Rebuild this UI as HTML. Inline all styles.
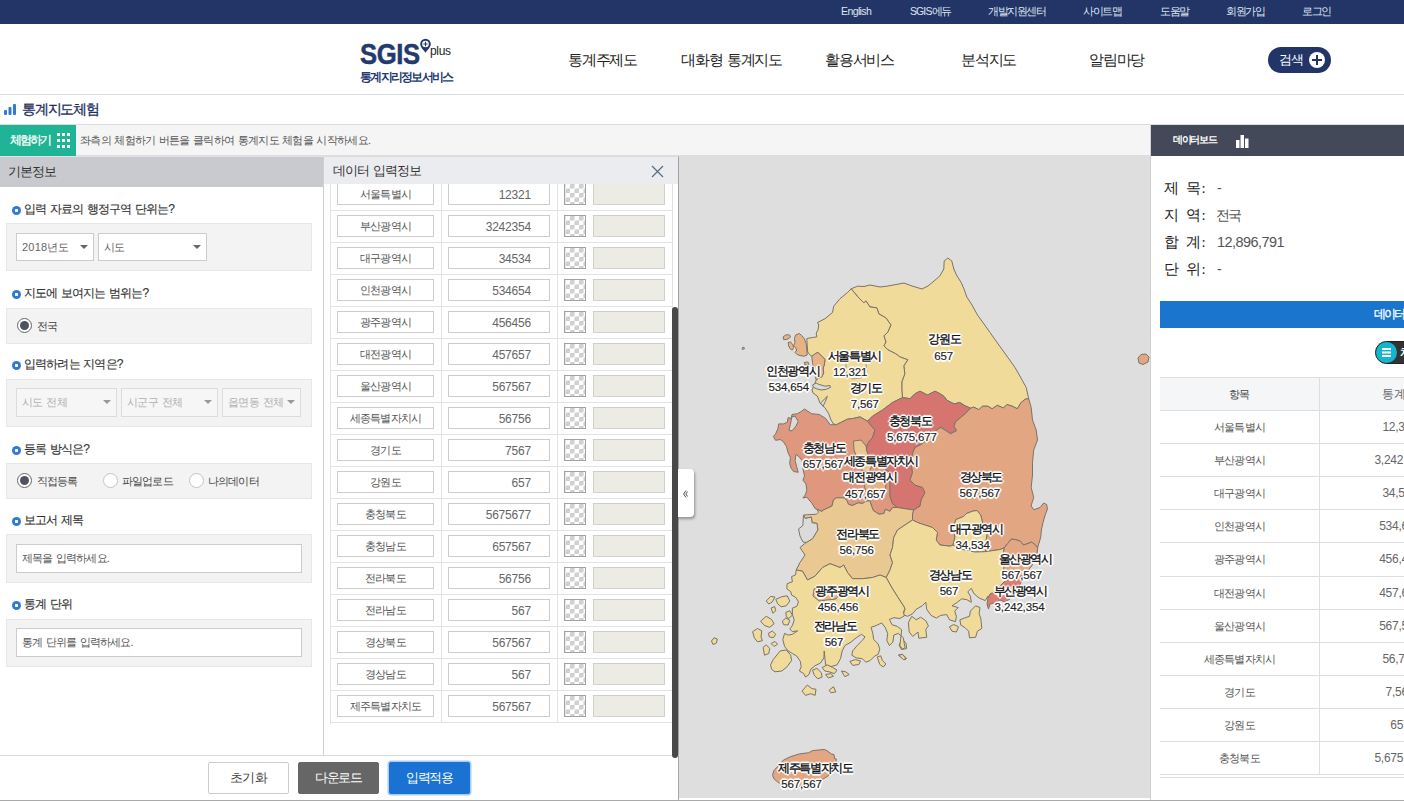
<!DOCTYPE html>
<html lang="ko">
<head>
<meta charset="utf-8">
<title>통계지도체험</title>
<style>
*{box-sizing:border-box;margin:0;padding:0}
html,body{width:1404px;height:801px;overflow:hidden;background:#fff;font-family:"Liberation Sans",sans-serif;color:#333;letter-spacing:-0.5px}
body{position:relative}
.abs{position:absolute}
/* top bar */
#topbar{position:absolute;left:0;top:0;width:1404px;height:24px;background:#223566}
#topbar span{position:absolute;top:5px;font-size:10.500px;color:#dfe5f2;line-height:13px;white-space:nowrap;letter-spacing:-1.5px}
/* header */
#header{position:absolute;left:0;top:24px;width:1404px;height:71px;background:#fff;border-bottom:1px solid #d9dbe3}
#logo1{position:absolute;left:360px;top:15px;font-size:29px;font-weight:bold;color:#233a6e;line-height:30px;letter-spacing:-0.5px;transform:scaleX(0.885);transform-origin:0 0;-webkit-text-stroke:0.5px #233a6e}
#logoplus{position:absolute;left:430px;top:20px;font-size:12px;color:#222;line-height:14px;letter-spacing:-0.3px}
#logo2{position:absolute;left:360px;top:46px;font-size:12px;font-weight:bold;color:#233a6e;line-height:14px;letter-spacing:-1.72px;white-space:nowrap}
.nav{position:absolute;word-spacing:1.500px;top:27px;font-size:15px;color:#222;line-height:18px;white-space:nowrap;letter-spacing:-1.2px}
#search{position:absolute;left:1268px;top:23px;width:63px;height:26px;border-radius:13px;background:#223566;color:#fff;font-size:13px;line-height:26px;padding-left:11px;letter-spacing:-0.8px}
#search i{position:absolute;left:41px;top:5px;width:16px;height:16px;border-radius:8px;background:#fff}
#search i:before{content:"";position:absolute;left:3px;top:7px;width:10px;height:2px;background:#223566}
#search i:after{content:"";position:absolute;left:7px;top:3px;width:2px;height:10px;background:#223566}
/* title row */
#titlerow{position:absolute;left:0;top:95px;width:1404px;height:30px;background:#fff;border-bottom:1px solid #dcdcdc}
#titlerow b{position:absolute;left:22px;top:5px;font-size:14px;color:#1f2f5c;line-height:18px;font-weight:normal;letter-spacing:-1.2px;-webkit-text-stroke:0.3px #1f2f5c;white-space:nowrap}
/* toolbar */
#toolbar{position:absolute;left:0;top:125px;width:1150px;height:31px;background:#f5f5f5;border-bottom:1px solid #dedede}
#trybtn{position:absolute;left:0;top:0;width:76px;height:31px;background:#1fb495;color:#fff;font-size:11.500px;line-height:30px;padding-left:10px;letter-spacing:-1.85px;-webkit-text-stroke:0.3px #fff;white-space:nowrap}
#tooltext{position:absolute;left:80px;top:0;font-size:11px;line-height:31px;color:#555;white-space:nowrap;letter-spacing:-0.7px;word-spacing:1px}

/* left panel */
#left{position:absolute;left:0;top:156px;width:324px;height:600px;background:#fff;border-right:1px solid #cfcfcf;border-top:1px solid #e3e3e3}
#lefthead{position:absolute;left:0;top:0;width:323px;height:30px;background:#c9cacf;font-size:13px;line-height:30px;padding-left:8px;color:#333;letter-spacing:-1px}
.lab{position:absolute;left:24px;font-size:12px;line-height:16px;color:#333;white-space:nowrap;letter-spacing:-0.85px;word-spacing:1px;font-weight:normal;-webkit-text-stroke:0.15px #333}
.bul{position:absolute;left:11.500px;width:9px;height:9px;border-radius:5px;background:radial-gradient(circle at 50% 50%,#fff 1.300px,#2f7bd3 2px);margin-top:0.500px}
.box{position:absolute;left:6px;width:306px;background:#f3f3f3;border:1px solid #e7e7e7}
.sel{position:absolute;height:28px;background:#fff;border:1px solid #ccc;font-size:11px;line-height:26px;padding-left:5px;color:#666;letter-spacing:-0.6px;word-spacing:1px;white-space:nowrap}
.sel:after{content:"";position:absolute;right:5px;top:11px;border-left:4.500px solid transparent;border-right:4.500px solid transparent;border-top:4.500px solid #666}
.sel.dis{background:#f6f6f6;color:#b0b0b0;border-color:#dcdcdc}
.sel.dis:after{border-top-color:#999}
.radio{position:absolute;width:15px;height:15px;border-radius:8px;border:1px solid #c4c4c4;background:#fff}
.radio.on{border-color:#666}
.radio.on:after{content:"";position:absolute;left:2px;top:2px;width:9px;height:9px;border-radius:5px;background:#50545f}
.rtx{position:absolute;font-size:11px;line-height:16px;color:#444;white-space:nowrap;letter-spacing:-0.85px}
.inp{position:absolute;left:9px;width:286px;height:29px;background:#fff;border:1px solid #ccc;font-size:11px;line-height:26px;padding-left:5px;color:#555;letter-spacing:-0.8px;word-spacing:1px;white-space:nowrap}
/* bottom bar */
#bbar{position:absolute;left:0;top:755px;width:679px;height:45px;background:#fff;border-top:1px solid #d5dde3;border-right:1px solid #a8a8a8}
.btn{position:absolute;top:6px;height:32px;width:81px;text-align:center;font-size:12.500px;line-height:30px;border-radius:2px;letter-spacing:-1.35px;white-space:nowrap}
#pagebottom{position:absolute;left:0;top:800px;width:1404px;height:1px;background:#a9a9a9;z-index:9}

/* mid panel */
#mid{position:absolute;left:324px;top:156px;width:355px;height:599px;border-top:1px solid #dcdcdc;background:#fff;overflow:hidden;border-right:1px solid #a0a0a0}
#midhead{position:absolute;left:0;top:0;width:354px;height:27px;background:#ebecef;font-size:13px;line-height:28px;padding-left:9px;color:#333;letter-spacing:-0.9px;word-spacing:1px;z-index:3;white-space:nowrap}
#tbl{position:absolute;left:6px;top:21px;width:342px;height:546px;border-left:1px solid #e2e3e5;border-top:1px solid #e2e3e5}
.row{position:absolute;left:0;width:342px;height:32px;border-bottom:1px solid #e2e3e5;border-right:1px solid #e2e3e5;background:#fff}
.row .c1{position:absolute;left:0;top:0;width:111px;height:31px;border-right:1px solid #e2e3e5}
.row .c2{position:absolute;left:111px;top:0;width:116px;height:31px;border-right:1px solid #e2e3e5}
.row .n{position:absolute;left:6px;top:4px;width:97px;height:22px;background:#fff;border:1px solid #ccc;font-size:11px;line-height:21px;text-align:center;color:#555;letter-spacing:-0.9px;white-space:nowrap}
.row .v{position:absolute;left:117px;top:4px;width:102px;height:22px;background:#fff;border:1px solid #ccc;font-size:12px;line-height:22.500px;text-align:right;padding-right:18px;color:#666;letter-spacing:-0.2px}
.row .ck{position:absolute;left:233px;top:4px;width:22px;height:22px;border:1px solid #a2a2a2;background-color:#fff;background-image:linear-gradient(45deg,#cdcdcd 25%,transparent 25%,transparent 75%,#cdcdcd 75%),linear-gradient(45deg,#cdcdcd 25%,transparent 25%,transparent 75%,#cdcdcd 75%);background-size:9px 9px;background-position:0.500px 0,5px 4.500px}
.row .bg{position:absolute;left:262px;top:4px;width:72px;height:22px;background:#ecece4;border:1px solid #cfcfcc}
#sbar{position:absolute;left:672px;top:307px;width:6px;height:451px;border-radius:3px;background:#484848;z-index:6}
#handle{position:absolute;left:678px;top:469px;width:16px;height:48px;background:#fff;border-radius:0 4px 4px 0;box-shadow:0.500px 2px 3px rgba(0,0,0,.35);z-index:5}

/* right panel */
#right{position:absolute;left:1150px;top:125px;width:254px;height:675px;background:#fff;border-left:1px solid #d2d2d2;overflow:hidden}
#rhead{position:absolute;left:0;top:0;width:254px;height:31px;background:#434959}
#rhead b{position:absolute;left:22px;top:9px;font-size:10px;line-height:12px;color:#fff;letter-spacing:-1.35px;white-space:nowrap}
.info{position:absolute;left:13px;font-size:15px;line-height:18px;color:#333;white-space:nowrap}
.info b{font-family:"Liberation Serif",serif;font-weight:normal;letter-spacing:0.4px;word-spacing:2.500px;color:#222}
.info span{position:absolute;left:53px;top:0;font-size:14.500px;color:#555;letter-spacing:-0.55px}
#bluebar{position:absolute;left:9px;top:176px;width:260px;height:27px;background:#1976cc;color:#fff;font-size:12px;line-height:27px;letter-spacing:-1.9px;white-space:nowrap;-webkit-text-stroke:0.3px #fff}
#bluebar span{position:absolute;left:214px}
#toggle{position:absolute;left:224px;top:216px;width:60px;height:23px;border-radius:12px;background:#333;border:1px solid #222;color:#fff;font-size:11px;line-height:21px;padding-left:24px;letter-spacing:-1px;font-weight:bold}
#toggle i{position:absolute;left:0;top:0;width:21px;height:21px;border-radius:11px;background:#12b6cf}
#toggle i:before{content:"";position:absolute;left:6px;top:6px;width:9px;height:2px;background:#fff;box-shadow:0 3.500px 0 #fff,0 7px 0 #fff}
#rtbl{position:absolute;left:9px;top:252px;width:400px;height:400px;border-top:1px solid #dedede}
.rr{position:absolute;left:0;width:400px;height:33px;border-bottom:1px solid #dedede;font-size:12px;color:#555}
.rr .a{position:absolute;left:0;top:0;width:160px;height:100%;border-right:1px solid #dedede;text-align:center;line-height:33px;font-size:11px;letter-spacing:-0.95px;white-space:nowrap}
.rr .b{position:absolute;left:160px;top:0;width:160px;height:32px;text-align:center;line-height:32px;letter-spacing:-0.25px;white-space:nowrap;color:#666}
.rr.h{background:#f5f6f8;color:#444}
/*MAPCSS*/
#mapwrap{position:absolute;left:679px;top:156px;width:471px;height:642px;background:#dedede;overflow:hidden}
#mapwrap svg{left:0!important;top:0!important}
.ml{position:absolute;width:120px;text-align:center;font-size:12px;line-height:16.500px;color:#111;font-weight:normal;letter-spacing:0;white-space:nowrap;-webkit-text-stroke:0.35px #111;text-shadow:-1.500px 0 0 #fff,1.500px 0 0 #fff,0 -1.500px 0 #fff,0 1.500px 0 #fff,-1px -1px 0 #fff,1px -1px 0 #fff,-1px 1px 0 #fff,1px 1px 0 #fff,-2px 0 1px #fff,2px 0 1px #fff,0 2px 1px #fff,0 -2px 1px #fff}
.ml span{letter-spacing:-1.400px;margin-right:-1.400px}
.mv{font-size:11.500px;-webkit-text-stroke:0.15px #222;color:#222;letter-spacing:-0.150px}
/*ENDMAPCSS*/</style>
</head>
<body>
<div id="topbar">
<span style="left:841px;letter-spacing:-0.6px">English</span>
<span style="left:910px"><i style="font-style:normal;letter-spacing:-0.9px">SGIS</i>에듀</span>
<span style="left:988px">개발지원센터</span>
<span style="left:1083px">사이트맵</span>
<span style="left:1160px">도움말</span>
<span style="left:1226px">회원가입</span>
<span style="left:1302px">로그인</span>
</div>
<div id="header">
<div id="logo1">SGIS</div>
<svg class="abs" style="left:419px;top:14px" width="13" height="16" viewBox="0 0 13 16"><path d="M6.5 0.8a5.3 5.3 0 0 1 5.3 5.3c0 3.2-3.6 6.3-5.3 8.6C4.800 12.400 1.200 9.300 1.200 6.100A5.300 5.300 0 0 1 6.500 0.800z" fill="#233a6e"/><circle cx="6.500" cy="6" r="3.300" fill="#fff"/><path d="M6.500 3.800v4.400M4.300 6h4.400" stroke="#233a6e" stroke-width="1.100"/></svg>
<div id="logoplus">plus</div>
<div id="logo2">통계지리정보서비스</div>
<div class="nav" style="left:568px">통계주제도</div>
<div class="nav" style="left:681px">대화형 통계지도</div>
<div class="nav" style="left:825px">활용서비스</div>
<div class="nav" style="left:961px">분석지도</div>
<div class="nav" style="left:1089px">알림마당</div>
<div id="search">검색<i></i></div>
</div>
<div id="titlerow">
<svg class="abs" style="left:4px;top:8px" width="13" height="12" viewBox="0 0 13 12"><rect x="0" y="7" width="3" height="5" rx="1" fill="#2f7bd3"/><rect x="4.500" y="4" width="3" height="8" rx="1" fill="#2f7bd3"/><rect x="9" y="1" width="3" height="11" rx="1" fill="#2f7bd3"/></svg>
<b>통계지도체험</b>
</div>
<div id="toolbar">
<div id="trybtn">체험하기
<svg class="abs" style="left:57px;top:8px" width="13" height="15" viewBox="0 0 13 15"><g fill="#fff"><rect x="0" y="0" width="3" height="3"/><rect x="5" y="0" width="3" height="3"/><rect x="10" y="0" width="3" height="3"/><rect x="0" y="6" width="3" height="3"/><rect x="5" y="6" width="3" height="3"/><rect x="10" y="6" width="3" height="3"/><rect x="0" y="12" width="3" height="3"/><rect x="5" y="12" width="3" height="3"/><rect x="10" y="12" width="3" height="3"/></g></svg>
</div>
<div id="tooltext">좌측의 체험하기 버튼을 클릭하여 통계지도 체험을 시작하세요.</div>
</div>
<div id="left">
<div id="lefthead">기본정보</div>
<i class="bul" style="top:48px"></i><div class="lab" style="top:44px">입력 자료의 행정구역 단위는?</div>
<div class="box" style="top:66px;height:48px">
<div class="sel" style="left:9px;top:9px;width:78px;letter-spacing:0.2px">2018년도</div>
<div class="sel" style="left:91px;top:9px;width:109px">시도</div>
</div>
<i class="bul" style="top:132px"></i><div class="lab" style="top:128px">지도에 보여지는 범위는?</div>
<div class="box" style="top:151px;height:36px">
<i class="radio on" style="left:10px;top:9px"></i><div class="rtx" style="left:30px;top:9px">전국</div>
</div>
<i class="bul" style="top:203px"></i><div class="lab" style="top:199px">입력하려는 지역은?</div>
<div class="box" style="top:222px;height:48px">
<div class="sel dis" style="left:9px;top:8px;width:101px;height:29px">시도 전체</div>
<div class="sel dis" style="left:114px;top:8px;width:97px;height:29px">시군구 전체</div>
<div class="sel dis" style="left:215px;top:8px;width:79px;height:29px">읍면동 전체</div>
</div>
<i class="bul" style="top:288px"></i><div class="lab" style="top:284px">등록 방식은?</div>
<div class="box" style="top:306px;height:36px">
<i class="radio on" style="left:10px;top:9px"></i><div class="rtx" style="left:30px;top:9px">직접등록</div>
<i class="radio" style="left:96px;top:9px"></i><div class="rtx" style="left:115px;top:9px">파일업로드</div>
<i class="radio" style="left:182px;top:9px"></i><div class="rtx" style="left:201px;top:9px">나의데이터</div>
</div>
<i class="bul" style="top:359px"></i><div class="lab" style="top:355px">보고서 제목</div>
<div class="box" style="top:377px;height:49px">
<div class="inp" style="top:9px">제목을 입력하세요.</div>
</div>
<i class="bul" style="top:443px"></i><div class="lab" style="top:439px">통계 단위</div>
<div class="box" style="top:462px;height:48px">
<div class="inp" style="top:8px">통계 단위를 입력하세요.</div>
</div>
</div>
<div id="bbar">
<div class="btn" style="left:208px;background:#fff;border:1px solid #ccc;color:#444;letter-spacing:-0.8px">초기화</div>
<div class="btn" style="left:298px;background:#666;border:1px solid #666;color:#fff">다운로드</div>
<div class="btn" style="left:389px;background:#1a73d2;border:1px solid #1a73d2;color:#fff;box-shadow:0 0 0 1.500px #a9cbf7">입력적용</div>
</div>
<div id="pagebottom"></div>

<div id="mid">
<div id="midhead">데이터 입력정보
<svg class="abs" style="left:327px;top:8px" width="13" height="13" viewBox="0 0 13 13"><path d="M1 1L12 12M12 1L1 12" stroke="#5a6a80" stroke-width="1.200" fill="none"/></svg>
</div>
<div id="tbl">
<div class="row" style="top:0px"><div class="c1"></div><div class="c2"></div><div class="n">서울특별시</div><div class="v">12321</div><i class="ck"></i><i class="bg"></i></div>
<div class="row" style="top:32px"><div class="c1"></div><div class="c2"></div><div class="n">부산광역시</div><div class="v">3242354</div><i class="ck"></i><i class="bg"></i></div>
<div class="row" style="top:64px"><div class="c1"></div><div class="c2"></div><div class="n">대구광역시</div><div class="v">34534</div><i class="ck"></i><i class="bg"></i></div>
<div class="row" style="top:96px"><div class="c1"></div><div class="c2"></div><div class="n">인천광역시</div><div class="v">534654</div><i class="ck"></i><i class="bg"></i></div>
<div class="row" style="top:128px"><div class="c1"></div><div class="c2"></div><div class="n">광주광역시</div><div class="v">456456</div><i class="ck"></i><i class="bg"></i></div>
<div class="row" style="top:160px"><div class="c1"></div><div class="c2"></div><div class="n">대전광역시</div><div class="v">457657</div><i class="ck"></i><i class="bg"></i></div>
<div class="row" style="top:192px"><div class="c1"></div><div class="c2"></div><div class="n">울산광역시</div><div class="v">567567</div><i class="ck"></i><i class="bg"></i></div>
<div class="row" style="top:224px"><div class="c1"></div><div class="c2"></div><div class="n">세종특별자치시</div><div class="v">56756</div><i class="ck"></i><i class="bg"></i></div>
<div class="row" style="top:256px"><div class="c1"></div><div class="c2"></div><div class="n">경기도</div><div class="v">7567</div><i class="ck"></i><i class="bg"></i></div>
<div class="row" style="top:288px"><div class="c1"></div><div class="c2"></div><div class="n">강원도</div><div class="v">657</div><i class="ck"></i><i class="bg"></i></div>
<div class="row" style="top:320px"><div class="c1"></div><div class="c2"></div><div class="n">충청북도</div><div class="v">5675677</div><i class="ck"></i><i class="bg"></i></div>
<div class="row" style="top:352px"><div class="c1"></div><div class="c2"></div><div class="n">충청남도</div><div class="v">657567</div><i class="ck"></i><i class="bg"></i></div>
<div class="row" style="top:384px"><div class="c1"></div><div class="c2"></div><div class="n">전라북도</div><div class="v">56756</div><i class="ck"></i><i class="bg"></i></div>
<div class="row" style="top:416px"><div class="c1"></div><div class="c2"></div><div class="n">전라남도</div><div class="v">567</div><i class="ck"></i><i class="bg"></i></div>
<div class="row" style="top:448px"><div class="c1"></div><div class="c2"></div><div class="n">경상북도</div><div class="v">567567</div><i class="ck"></i><i class="bg"></i></div>
<div class="row" style="top:480px"><div class="c1"></div><div class="c2"></div><div class="n">경상남도</div><div class="v">567</div><i class="ck"></i><i class="bg"></i></div>
<div class="row" style="top:512px"><div class="c1"></div><div class="c2"></div><div class="n">제주특별자치도</div><div class="v">567567</div><i class="ck"></i><i class="bg"></i></div>
</div>
</div>
<div id="sbar"></div>
<div id="handle"><svg class="abs" style="left:5px;top:20.500px" width="5" height="8" viewBox="0 0 5 8"><path d="M3 0.500L0.600 4L3 7.500M4.600 1.500L2.800 4L4.600 6.500" stroke="#222" stroke-width="0.800" fill="none"/></svg></div>

<!--MAPSTART--><div id="mapwrap">
<svg id="map" style="position:absolute;left:679px;top:156px" width="471" height="642" viewBox="0 0 471 642">
<g stroke="#7a7468" stroke-linejoin="round">
<path d="M172.2 132.8L178.5 130.2L185.0 130.5L191.0 129.0L201.0 131.0L209.0 130.0L217.0 128.5L225.0 127.0L233.0 130.0L243.0 133.0L249.0 130.0L255.0 125.0L260.8 120.0L264.8 113.0L265.2 105.0L268.8 102.0L272.8 105.0L274.8 113.0L278.0 120.0L282.2 126.5L285.0 133.0L287.8 141.0L293.0 149.0L298.5 159.0L305.0 168.0L311.0 176.5L317.0 185.0L323.5 194.0L330.0 203.0L336.0 211.5L342.0 222.0L347.2 231.5L349.7 242.7L346.3 243.2L341.9 246.7L338.4 252.8L333.2 250.2L327.9 248.5L324.4 252.0L318.3 249.3L313.1 252.8L308.7 250.2L303.4 250.2L299.9 253.7L294.7 251.1L291.5 252.2L285.8 249.7L280.8 246.5L275.1 247.9L268.0 244.3L265.0 240.4L261.0 237.7L256.0 235.2L248.5 239.0L241.0 235.2L236.0 237.7L231.0 242.7L223.5 241.5L222.8 233.8L222.8 225.8L225.8 217.8L224.8 209.8L228.8 203.8L220.8 200.8L216.8 197.8L208.9 193.8L204.9 189.8L206.9 185.9L204.9 179.9L208.9 175.9L211.9 168.9L206.9 161.9L199.9 157.9L197.9 151.9L190.9 150.9L186.9 144.9L184.9 146.9L178.9 140.9L172.2 132.8Z" fill="#f0db9b" stroke-width="1"/>
<path d="M172.2 132.8L178.9 140.9L184.9 146.9L186.9 144.9L190.9 150.9L197.9 151.9L199.9 157.9L206.9 161.9L211.9 168.9L208.9 175.9L204.9 179.9L206.9 185.9L204.9 189.8L208.9 193.8L216.8 197.8L220.8 200.8L228.8 203.8L224.8 209.8L225.8 217.8L222.8 225.8L222.8 233.8L223.5 241.5L213.5 246.5L203.5 254.0L193.5 260.2L188.5 265.2L180.9 260.9L174.6 262.4L168.4 263.2L162.2 266.3L157.5 268.7L154.4 267.9L152.0 264.0L149.7 257.7L145.8 251.5L144.0 250.2L141.0 247.0L138.4 240.2L134.0 237.0L133.0 234.0L136.0 227.0L137.2 224.0L139.0 222.7L142.8 220.8L144.7 217.0L144.0 212.0L145.3 209.0L146.0 203.3L142.8 200.2L139.0 196.5L137.2 197.1L133.5 200.2L131.6 199.6L128.7 196.0L128.2 189.0L127.8 182.5L133.5 181.5L137.8 180.9L137.2 177.0L139.0 174.0L139.7 169.0L138.5 166.5L146.0 162.7L153.5 156.5L154.7 150.2L161.0 142.7L168.5 136.5L172.2 132.8Z" fill="#f0db9b" stroke-width="1"/>
<path d="M167.0 206.0L173.0 202.0L181.0 203.0L187.0 208.0L188.0 216.0L182.0 222.0L173.0 223.0L167.0 218.0Z" fill="#f0db9b" stroke-width="0.6"/>
<path d="M133.5 229.0L137.2 227.0L139.7 228.3L146.0 230.2L151.0 229.5L151.5 231.4L147.2 233.3L142.2 234.0L137.2 232.7L134.7 231.4Z" fill="#dbdbdb" stroke-width="1"/>
<path d="M141.5 247.0L148.4 240.2L146.5 245.2L144.0 250.2Z" fill="#dbdbdb" stroke-width="1"/>
<path d="M132.8 200.2L137.2 197.1L139.0 196.5L142.8 200.2L146.0 203.3L145.3 209.0L144.0 212.0L144.7 217.0L142.8 220.8L139.0 222.7L137.2 224.0L136.0 219.0L134.7 212.7L133.5 206.5Z" fill="#e7b384" stroke-width="1"/>
<path d="M116.6 179.0L120.3 177.5L122.8 179.6L125.3 182.7L127.2 187.7L127.8 194.0L128.2 199.0L125.3 200.2L121.0 199.6L117.8 198.3L116.0 196.5L117.8 194.0L116.6 191.5L114.7 189.6L116.0 186.5L115.4 182.7Z" fill="#e7b384" stroke-width="1"/>
<path d="M104.1 180.9L106.6 179.0L109.7 178.7L111.6 180.2L110.4 182.1L107.9 183.4L104.7 183.7Z" fill="#e7b384" stroke-width="1"/>
<path d="M109.1 186.5L111.6 185.9L113.5 188.4L114.7 191.5L113.5 194.0L111.6 193.3L109.7 190.2Z" fill="#e7b384" stroke-width="1"/>
<path d="M125.3 206.5L129.0 206.0L130.0 208.5L126.0 209.0Z" fill="#e7b384" stroke-width="1"/>
<path d="M63.0 192.0L64.7 191.0L65.5 192.7L63.5 193.5Z" fill="#e7b384" stroke-width="1"/>
<path d="M188.5 265.2L180.9 260.9L174.6 262.4L168.4 263.2L162.2 266.3L157.5 268.7L155.9 268.7L151.2 268.7L146.6 262.4L140.3 258.5L132.5 257.7L125.5 253.0L122.4 255.4L118.5 257.7L113.0 258.5L112.2 262.4L109.1 261.6L108.3 266.3L104.4 267.9L99.7 267.9L98.9 272.6L96.6 278.0L94.3 280.4L96.6 284.3L101.3 283.5L104.4 285.8L107.5 290.5L109.1 296.8L111.4 301.4L110.7 307.7L112.2 312.4L114.6 315.5L119.2 316.3L117.7 310.8L116.1 304.6L116.9 298.3L120.0 300.7L123.1 304.6L123.9 312.4L125.5 320.2L123.9 324.1L127.0 328.0L127.8 334.2L126.3 338.9L123.9 342.0L127.8 341.2L132.5 346.7L136.4 352.9L138.0 353.2L143.0 355.5L143.8 354.3L153.0 350.0L154.4 344.0L157.3 341.8L165.1 341.8L168.0 344.7L169.4 348.2L173.0 349.6L179.4 346.8L183.6 347.5L186.5 345.4L190.8 344.7L192.2 349.0L194.3 354.6L200.0 358.2L205.0 357.5L206.4 353.2L211.0 355.3L213.5 351.5L218.5 351.5L213.5 347.7L211.0 340.2L211.0 331.5L211.0 316.5L201.0 309.0L191.0 301.5L187.2 294.0L188.5 287.7L193.5 281.5L196.0 274.0Z" fill="#df987e" stroke-width="1"/>
<path d="M113.0 260.9L116.1 260.1L119.2 265.5L116.9 270.2L113.0 274.9L109.9 274.1L111.4 268.7L112.2 264.0Z" fill="#dbdbdb" stroke-width="1"/>
<path d="M187.0 321.0L195.0 319.0L203.0 322.0L207.0 328.0L206.0 336.0L201.0 341.0L193.0 341.0L187.0 336.0L185.0 328.0Z" fill="#e7b384" stroke-width="1"/>
<path d="M174.5 285.0L182.0 284.0L187.0 290.0L189.0 299.0L193.0 309.0L190.0 317.0L183.0 314.0L179.0 304.0L175.0 294.0Z" fill="#eac892" stroke-width="1"/>
<path d="M188.5 265.2L193.5 260.2L203.5 254.0L213.5 246.5L223.5 241.5L231.0 242.7L236.0 237.7L241.0 235.2L248.5 239.0L256.0 235.2L261.0 237.7L265.0 240.4L268.0 244.3L275.1 247.9L280.8 246.5L285.8 249.7L291.5 252.2L285.8 258.2L281.0 262.0L276.5 266.0L275.1 270.3L277.6 274.6L271.5 277.8L266.0 274.0L261.6 271.4L258.0 273.9L253.0 277.0L249.0 282.0L243.5 287.7L236.0 291.5L233.5 297.7L232.2 306.5L233.5 316.5L231.0 324.0L236.0 329.0L243.5 331.5L246.0 336.5L242.2 344.0L241.0 350.2L234.7 354.0L226.0 352.7L218.5 351.5L213.5 347.7L211.0 340.2L211.0 331.5L211.0 316.5L201.0 309.0L191.0 301.5L187.2 294.0L188.5 287.7L193.5 281.5L196.0 274.0L188.5 265.2Z" fill="#d6756f" stroke-width="1"/>
<path d="M291.5 252.2L294.7 251.1L299.9 253.7L303.4 250.2L308.7 250.2L313.1 252.8L318.3 249.3L324.4 252.0L327.9 248.5L333.2 250.2L338.4 252.8L341.9 246.7L346.3 243.2L349.7 242.7L352.2 251.5L353.5 264.0L357.2 274.0L358.5 284.0L354.7 294.0L353.5 306.5L353.5 319.0L352.2 331.5L354.7 341.5L352.0 350.0L355.0 353.7L361.0 351.5L364.7 347.0L367.7 348.5L368.4 353.0L366.2 359.0L364.0 366.5L362.4 374.0L361.7 381.5L359.4 389.0L358.7 392.0L356.4 389.0L352.7 386.0L349.0 387.5L344.4 389.0L341.4 385.2L337.0 383.7L332.4 383.0L328.7 387.5L325.0 392.0L321.0 393.5L311.0 395.0L305.5 395.7L308.0 392.0L307.0 385.0L308.0 378.0L305.0 372.0L303.2 365.0L301.7 359.0L298.0 354.5L293.5 355.2L287.5 357.5L284.5 360.5L277.0 363.5L274.0 372.0L276.0 381.0L274.0 389.0L271.0 390.2L261.0 389.0L257.2 384.0L258.5 376.5L253.5 371.5L246.0 369.0L238.5 366.5L233.5 364.0L233.5 357.7L234.7 354.0L241.0 350.2L242.2 344.0L246.0 336.5L243.5 331.5L236.0 329.0L231.0 324.0L233.5 316.5L232.2 306.5L233.5 297.7L236.0 291.5L243.5 287.7L249.0 282.0L253.0 277.0L258.0 273.9L261.6 271.4L266.0 274.0L271.5 277.8L277.6 274.6L275.1 270.3L276.5 266.0L281.0 262.0L285.8 258.2L291.5 252.2Z" fill="#e2a682" stroke-width="1"/>
<path d="M298.0 354.5L301.7 359.0L303.2 365.0L305.0 372.0L308.0 378.0L307.0 385.0L308.0 392.0L305.5 395.7L296.0 396.0L286.0 394.0L278.0 392.0L274.0 389.0L276.0 381.0L274.0 372.0L277.0 363.5L284.5 360.5L287.5 357.5L293.5 355.2L298.0 354.5Z" fill="#f0db9b" stroke-width="1"/>
<path d="M325.0 392.0L328.7 387.5L332.4 383.0L337.0 383.7L341.4 385.2L344.4 389.0L349.0 387.5L352.7 386.0L356.4 389.0L358.7 392.0L358.0 398.0L355.5 404.0L352.7 410.0L349.0 414.4L344.4 419.0L339.0 421.0L331.0 423.0L326.0 425.0L324.0 419.0L325.0 409.0L324.0 400.0Z" fill="#e2a682" stroke-width="1"/>
<path d="M326.0 425.0L331.0 423.0L339.0 421.0L344.4 419.0L343.0 425.0L339.0 432.0L334.0 438.0L331.0 443.0L326.0 446.0L321.0 444.0L316.0 447.0L311.0 448.0L309.5 453.0L308.0 448.0L309.0 442.0L311.0 438.0L315.0 436.0L319.0 433.0L322.0 429.0Z" fill="#dd7d70" stroke-width="1"/>
<path d="M138.0 353.2L143.0 355.5L143.8 354.3L153.0 350.0L154.4 344.0L157.3 341.8L165.1 341.8L168.0 344.7L169.4 348.2L173.0 349.6L179.4 346.8L183.6 347.5L186.5 345.4L190.8 344.7L192.2 349.0L194.3 354.6L200.0 358.2L205.0 357.5L206.4 353.2L211.0 355.3L213.5 351.5L218.5 351.5L226.0 352.7L234.7 354.0L233.5 357.7L233.5 364.0L226.0 369.0L218.5 374.0L214.7 381.5L213.5 391.5L211.0 399.0L213.5 406.5L211.0 414.0L207.2 421.5L201.0 419.0L193.5 421.5L183.5 422.7L173.5 422.7L168.5 416.5L164.7 409.0L161.0 411.5L151.0 407.7L143.5 411.5L136.0 420.2L128.5 424.0L123.5 415.2L117.2 414.0L121.0 406.5L126.0 399.0L121.0 391.5L127.2 386.5L133.5 382.7L137.2 376.5L138.8 374.0L138.0 367.4L133.0 366.7L132.4 361.0L126.3 362.5L124.5 359.0L137.4 358.2L139.5 356.4L138.0 353.2Z" fill="#eac892" stroke-width="1"/>
<path d="M124.5 359.0L126.3 362.5L132.4 361.0L133.0 366.7L138.0 367.4L138.8 374.0L137.2 376.5L133.5 382.7L127.2 386.5L124.0 386.0L121.0 380.0L119.5 373.0L123.8 369.6Z" fill="#dbdbdb" stroke-width="1"/>
<path d="M207.2 421.5L213.0 432.0L219.1 441.6L225.3 451.2L225.9 453.3L224.1 458.6L228.5 460.3L233.7 457.7L237.2 453.3L243.3 449.8L246.8 446.3L247.7 453.3L252.1 459.4L257.3 462.1L261.7 459.4L267.8 458.6L270.4 463.8L276.5 465.6L277.4 460.3L275.7 455.1L279.2 451.6L273.0 449.8L278.3 446.3L282.7 442.8L287.9 443.7L292.3 446.3L291.4 440.2L288.8 435.8L292.3 432.4L294.9 437.6L300.1 442.0L306.2 444.6L308.9 440.2L309.0 442.0L311.0 438.0L315.0 436.0L319.0 433.0L322.0 429.0L326.0 425.0L324.0 419.0L325.0 409.0L324.0 400.0L325.0 392.0L321.0 393.5L311.0 395.0L305.5 395.7L296.0 396.0L286.0 394.0L278.0 392.0L274.0 389.0L271.0 390.2L261.0 389.0L257.2 384.0L258.5 376.5L253.5 371.5L246.0 369.0L238.5 366.5L233.5 364.0L233.5 364.0L226.0 369.0L218.5 374.0L214.7 381.5L213.5 391.5L211.0 399.0L213.5 406.5L211.0 414.0L207.2 421.5Z" fill="#f0db9b" stroke-width="1"/>
<path d="M229.4 466.4L232.8 460.3L237.2 463.8L241.6 461.2L246.8 464.7L249.4 469.9L246.8 473.4L247.7 481.3L239.8 482.2L239.0 476.0L233.7 480.4L230.2 476.0Z" fill="#f0db9b" stroke-width="1"/>
<path d="M220.1 489.1L223.2 483.0L227.1 487.4L227.6 492.6L222.4 493.5Z" fill="#f0db9b" stroke-width="1"/>
<path d="M219.4 499.3L223.2 498.2L227.6 502.3L225.9 504.0Z" fill="#f0db9b" stroke-width="1"/>
<path d="M280.9 463.8L285.3 462.1L290.5 460.3L291.4 455.1L296.6 449.8L301.0 451.6L300.1 457.7L301.9 462.9L302.8 472.5L298.4 475.2L296.6 481.3L290.5 481.8L289.6 475.2L286.1 471.7L281.8 469.1Z" fill="#f0db9b" stroke-width="1"/>
<path d="M270.4 470.8L274.8 468.5L279.5 470.8L277.4 476.0L273.0 475.2Z" fill="#f0db9b" stroke-width="1"/>
<path d="M207.2 421.5L201.0 419.0L193.5 421.5L183.5 422.7L173.5 422.7L168.5 416.5L164.7 409.0L161.0 411.5L151.0 407.7L143.5 411.5L136.0 420.2L128.5 424.0L123.5 415.2L117.2 414.0L116.6 418.9L112.6 420.6L113.4 425.8L108.2 427.6L107.8 432.8L111.7 435.5L112.6 439.0L116.9 441.6L119.5 445.9L117.8 450.3L113.4 452.1L113.4 458.2L115.2 464.3L113.4 469.5L110.8 473.0L113.4 475.7L118.7 474.8L113.4 478.3L109.1 479.1L105.6 477.4L103.8 483.5L105.6 490.5L109.1 494.9L113.4 497.5L117.8 500.1L121.3 505.4L122.2 510.6L120.4 515.0L124.8 517.6L126.5 521.1L130.0 518.5L131.8 513.2L136.1 509.7L141.4 507.1L144.9 501.9L145.2 494.9L146.6 508.9L151.9 510.6L158.0 508.9L161.5 502.7L163.2 494.9L165.9 489.6L172.0 486.1L177.2 481.8L182.5 478.3L186.0 480.9L183.3 484.4L178.1 489.6L173.7 494.9L172.8 499.2L177.2 501.9L183.3 502.7L186.8 506.2L191.2 504.5L195.6 500.1L199.1 498.4L200.8 493.1L199.1 487.9L194.7 483.5L193.8 477.4L192.1 471.3L197.3 469.5L202.6 466.9L206.1 471.3L208.7 477.4L207.8 484.4L210.4 489.6L213.9 486.1L214.8 479.1L219.2 477.4L224.4 481.8L225.3 487.9L226.2 491.4L223.5 493.1L220.9 489.6L222.7 473.9L218.3 470.4L213.0 468.7L210.4 463.4L214.8 461.7L220.9 462.5L225.3 459.9L224.4 455.6L225.9 453.3L225.3 451.2L219.1 441.6L213.0 432.0Z" fill="#f0db9b" stroke-width="1"/>
<path d="M135.0 433.0L141.0 430.0L149.0 432.0L161.0 437.0L157.0 443.0L148.0 444.0L140.0 445.0L134.0 440.0Z" fill="#e7b384" stroke-width="1"/>
<path d="M91.6 508.9L94.2 503.6L101.2 494.9L107.3 494.0L111.7 499.2L112.6 504.5L108.2 510.6L102.9 515.0L96.0 515.8L92.5 513.2Z" fill="#f0db9b" stroke-width="1"/>
<path d="M133.5 514.1L137.9 512.4L142.3 516.7L143.1 521.1L138.8 522.8L135.3 519.3Z" fill="#f0db9b" stroke-width="1"/>
<path d="M143.1 511.5L148.4 508.9L153.6 511.5L158.0 514.1L155.4 517.6L150.1 515.8L145.8 515.0Z" fill="#f0db9b" stroke-width="1"/>
<path d="M146.6 518.5L151.9 517.6L154.5 520.2L149.3 522.0Z" fill="#f0db9b" stroke-width="1"/>
<path d="M162.4 515.0L166.7 515.8L170.2 518.5L165.9 520.7Z" fill="#f0db9b" stroke-width="1"/>
<path d="M123.0 535.1L128.3 529.0L132.7 532.5L137.0 533.3L136.1 539.4L131.8 537.7L126.5 539.4Z" fill="#f0db9b" stroke-width="1"/>
<path d="M150.1 534.2L154.5 530.7L156.8 535.9L151.9 536.8Z" fill="#f0db9b" stroke-width="1"/>
<path d="M170.8 505.4L176.3 503.6L181.6 505.0L179.8 508.5L173.7 509.4Z" fill="#f0db9b" stroke-width="1"/>
<path d="M198.2 501.0L201.7 499.8L203.4 504.5L206.9 508.0L204.3 511.0L200.8 508.5Z" fill="#f0db9b" stroke-width="1"/>
<path d="M219.7 499.2L223.5 498.4L227.0 502.7L224.4 503.6Z" fill="#f0db9b" stroke-width="1"/>
<path d="M87.2 445.1L91.6 440.4L96.0 441.0L93.3 445.9L89.8 448.0Z" fill="#f0db9b" stroke-width="1"/>
<path d="M96.8 443.3L102.9 440.7L108.2 439.8L110.8 445.1L107.3 449.8L102.1 450.8L98.6 447.7Z" fill="#f0db9b" stroke-width="1"/>
<path d="M92.1 452.1L95.6 450.5L96.8 454.7L93.9 457.3Z" fill="#f0db9b" stroke-width="1"/>
<path d="M106.8 456.4L110.8 454.7L113.4 459.1L109.9 462.5L107.3 460.8Z" fill="#f0db9b" stroke-width="1"/>
<path d="M81.6 465.2L87.2 460.3L92.5 463.4L95.1 467.8L90.7 471.3L85.5 469.5Z" fill="#f0db9b" stroke-width="1"/>
<path d="M103.3 465.2L106.8 462.0L110.8 464.3L109.1 469.0L104.7 468.7Z" fill="#f0db9b" stroke-width="1"/>
<path d="M73.6 475.7L78.5 472.5L82.8 474.8L82.0 480.9L83.4 484.7L78.5 485.8L75.3 481.8Z" fill="#f0db9b" stroke-width="1"/>
<path d="M89.3 477.4L93.3 475.0L96.8 478.3L94.2 481.8L90.4 480.9Z" fill="#f0db9b" stroke-width="1"/>
<path d="M92.1 487.5L96.0 485.4L98.6 488.2L95.1 490.5Z" fill="#f0db9b" stroke-width="1"/>
<path d="M84.1 491.4L87.2 488.9L90.7 492.3L89.8 497.5L85.5 499.2Z" fill="#f0db9b" stroke-width="1"/>
<path d="M32.5 485.0L35.0 481.8L38.3 483.0L37.5 487.0L34.0 488.5Z" fill="#f0db9b" stroke-width="1"/>
<path d="M93.5 619.6L94.6 615.0L98.6 610.5L104.3 604.2L111.1 600.8L120.3 597.9L129.4 596.8L133.9 594.5L140.8 593.9L145.3 593.4L148.7 595.1L152.2 597.9L155.0 598.5L155.6 602.5L157.3 603.0L157.0 607.0L155.0 613.0L149.0 620.0L139.0 626.0L127.0 630.0L116.0 631.0L106.0 629.5L100.9 627.6L98.6 625.9L95.2 623.0Z" fill="#e2a682" stroke-width="1"/>
<path d="M459.0 202.0L462.0 198.5L467.0 198.0L470.0 201.0L469.0 206.0L464.0 208.5L460.0 207.0Z" fill="#e2a682" stroke-width="1"/>
</g></svg>
<div class="ml" style="left:204.7px;top:175.4px"><span>강원도</span></div>
<div class="ml mv" style="left:204.7px;top:191.6px">657</div>
<div class="ml" style="left:114.7px;top:191.5px"><span>서울특별시</span></div>
<div class="ml mv" style="left:111.2px;top:207.7px">12,321</div>
<div class="ml" style="left:53.0px;top:207.2px"><span>인천광역시</span></div>
<div class="ml mv" style="left:49.8px;top:223.4px">534,654</div>
<div class="ml" style="left:126.1px;top:223.5px"><span>경기도</span></div>
<div class="ml mv" style="left:125.7px;top:239.7px">7,567</div>
<div class="ml" style="left:170.4px;top:257.2px"><span>충청북도</span></div>
<div class="ml mv" style="left:172.9px;top:273.4px">5,675,677</div>
<div class="ml" style="left:84.4px;top:283.5px"><span>충청남도</span></div>
<div class="ml mv" style="left:84.0px;top:299.7px">657,567</div>
<div class="ml" style="left:141.2px;top:297.0px"><span>세종특별자치시</span></div>
<div class="ml" style="left:130.2px;top:313.4px"><span>대전광역시</span></div>
<div class="ml mv" style="left:126.3px;top:329.6px">457,657</div>
<div class="ml" style="left:241.2px;top:312.9px"><span>경상북도</span></div>
<div class="ml mv" style="left:240.7px;top:329.1px">567,567</div>
<div class="ml" style="left:118.0px;top:370.2px"><span>전라북도</span></div>
<div class="ml mv" style="left:117.6px;top:386.4px">56,756</div>
<div class="ml" style="left:236.4px;top:364.7px"><span>대구광역시</span></div>
<div class="ml mv" style="left:233.7px;top:380.9px">34,534</div>
<div class="ml" style="left:285.5px;top:394.8px"><span>울산광역시</span></div>
<div class="ml mv" style="left:282.7px;top:411.0px">567,567</div>
<div class="ml" style="left:210.4px;top:411.0px"><span>경상남도</span></div>
<div class="ml mv" style="left:210.0px;top:427.2px">567</div>
<div class="ml" style="left:280.5px;top:426.7px"><span>부산광역시</span></div>
<div class="ml mv" style="left:280.5px;top:442.9px">3,242,354</div>
<div class="ml" style="left:102.2px;top:426.6px"><span>광주광역시</span></div>
<div class="ml mv" style="left:99.1px;top:442.8px">456,456</div>
<div class="ml" style="left:95.4px;top:462.2px"><span>전라남도</span></div>
<div class="ml mv" style="left:95.0px;top:478.4px">567</div>
<div class="ml" style="left:75.6px;top:604.2px"><span>제주특별자치도</span></div>
<div class="ml mv" style="left:62.5px;top:620.4px">567,567</div>
</div>
<!--MAPEND-->
<div id="right">
<div id="rhead"><b>데이터보드</b>
<svg class="abs" style="left:85px;top:9px" width="13" height="14" viewBox="0 0 13 14"><rect x="0" y="6" width="3.500" height="8" fill="#fff"/><rect x="4.500" y="1" width="3.500" height="13" fill="#fff"/><rect x="9" y="4.500" width="3.500" height="9.500" fill="#fff"/></svg>
</div>
<div class="info" style="top:54px"><b>제 목:</b><span>-</span></div>
<div class="info" style="top:81px"><b>지 역:</b><span style="font-size:14px;letter-spacing:-2px;left:52px">전국</span></div>
<div class="info" style="top:108px"><b>합 계:</b><span>12,896,791</span></div>
<div class="info" style="top:135px"><b>단 위:</b><span>-</span></div>
<div id="bluebar"><span>데이터 입력정보</span></div>
<div id="toggle"><i></i>차트</div>
<div id="rtbl">
<div class="rr h" style="top:0"><div class="a">항목</div><div class="b">통계값</div></div>
<div class="rr" style="top:33px;height:33px"><div class="a">서울특별시</div><div class="b">12,321</div></div>
<div class="rr" style="top:66px;height:33px"><div class="a">부산광역시</div><div class="b">3,242,354</div></div>
<div class="rr" style="top:99px;height:33px"><div class="a">대구광역시</div><div class="b">34,534</div></div>
<div class="rr" style="top:132px;height:33px"><div class="a">인천광역시</div><div class="b">534,654</div></div>
<div class="rr" style="top:165px;height:34px"><div class="a">광주광역시</div><div class="b">456,456</div></div>
<div class="rr" style="top:199px;height:33px"><div class="a">대전광역시</div><div class="b">457,657</div></div>
<div class="rr" style="top:232px;height:33px"><div class="a">울산광역시</div><div class="b">567,567</div></div>
<div class="rr" style="top:265px;height:33px"><div class="a">세종특별자치시</div><div class="b">56,756</div></div>
<div class="rr" style="top:298px;height:33px"><div class="a">경기도</div><div class="b">7,567</div></div>
<div class="rr" style="top:331px;height:33px"><div class="a">강원도</div><div class="b">657</div></div>
<div class="rr" style="top:364px;height:33px"><div class="a">충청북도</div><div class="b">5,675,677</div></div>
<div style="position:absolute;left:0;top:399px;width:400px;height:1px;background:#dedede"></div>
</div>
</div>

</body>
</html>
